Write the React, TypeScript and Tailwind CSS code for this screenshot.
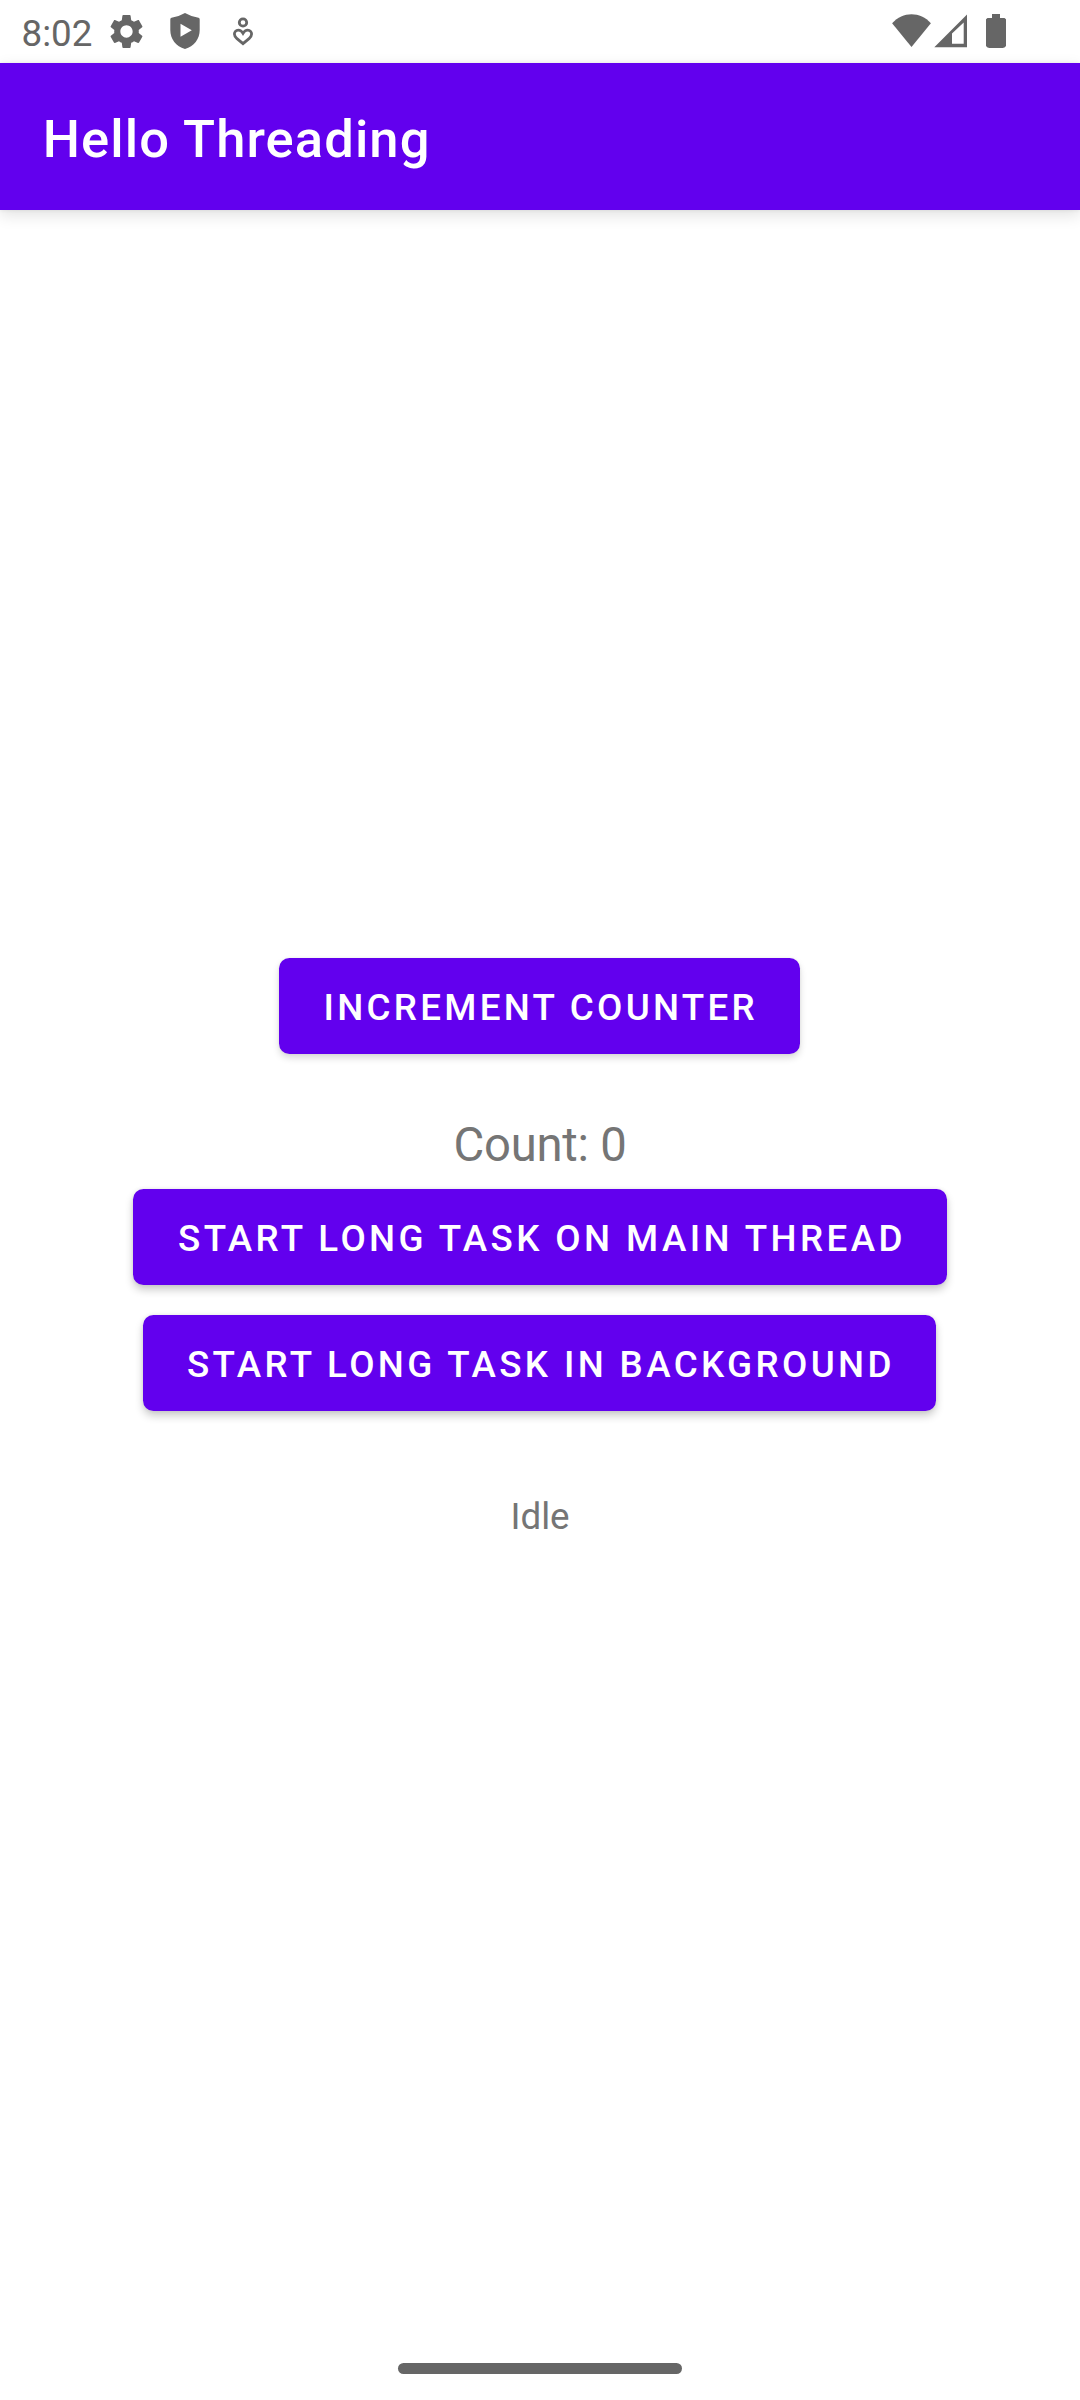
import { useState } from "react";

function StatusBar() {
  return (
    <header className="flex h-[63px] w-full items-center text-[#666]">
      <span className="ml-[21.5px] w-[70.5px] pt-[4px] text-[36.75px] leading-[43px]">8:02</span>
      <svg className="mb-px ml-[14px] h-[41px] w-[41px]" viewBox="0 0 24 24" fill="currentColor" aria-label="Settings">
        <path d="M19.14 12.94c.04-.3.06-.61.06-.94 0-.32-.02-.64-.07-.94l2.03-1.58c.18-.14.23-.41.12-.61l-1.92-3.32c-.12-.22-.37-.29-.59-.22l-2.39.96c-.5-.38-1.03-.7-1.62-.94l-.36-2.54c-.04-.24-.24-.41-.48-.41h-3.84c-.24 0-.43.17-.47.41l-.36 2.54c-.59.24-1.13.57-1.62.94l-2.39-.96c-.22-.08-.47 0-.59.22L2.74 8.87c-.12.21-.08.47.12.61l2.03 1.58c-.05.3-.09.63-.09.94s.02.64.07.94l-2.03 1.58c-.18.14-.23.41-.12.61l1.92 3.32c.12.22.37.29.59.22l2.39-.96c.5.38 1.03.7 1.62.94l.36 2.54c.05.24.24.41.48.41h3.84c.24 0 .44-.17.47-.41l.36-2.54c.59-.24 1.13-.56 1.62-.94l2.39.96c.22.08.47 0 .59-.22l1.92-3.32c.12-.22.07-.47-.12-.61l-2.01-1.58zM12 15.6c-1.98 0-3.6-1.62-3.6-3.6s1.62-3.6 3.6-3.6 3.6 1.62 3.6 3.6-1.62 3.6-3.6 3.6z" />
      </svg>
      <svg className="mb-px ml-[23px] h-[36px] w-[30px]" viewBox="0 0 30 36" fill="currentColor" fillRule="evenodd" aria-label="Protection">
        <path d="M15 0 Q8 4 1.5 4.8 Q.3 5 .3 6.5 V17 C.3 26 6 33.5 15 36 C24 33.5 29.7 26 29.7 17 V6.5 Q29.7 5 28.5 4.8 Q22 4 15 0Z M10.5 10.8 V23.8 L21.8 17.3Z" />
      </svg>
      <svg className="ml-[33px] h-[29px] w-[20px]" viewBox="0 0 20 29" fill="none" stroke="currentColor" strokeWidth="2.8" aria-label="Wellbeing">
        <circle cx="10" cy="5.5" r="3.7" />
        <path d="M10 16.3 C8.5 13.8 6.8 13.2 5.3 13.2 C2.8 13.2 1.4 15 1.4 17 C1.4 19 2.4 20.2 4 21.7 L10 26.6 L16 21.7 C17.6 20.2 18.6 19 18.6 17 C18.6 15 17.2 13.2 14.7 13.2 C13.2 13.2 11.5 13.8 10 16.3Z" />
      </svg>
      <div className="mb-[1px] ml-auto mr-[74px] flex h-[35px] items-start">
        <svg className="h-[34px] w-[40px]" viewBox="0 0 40 34" fill="currentColor" aria-label="Wi-Fi">
          <path d="M.1 9.3 C5.5 3.2 12.5 .2 19.5 .2 S33.7 3.2 38.9 9.3 L19.5 33Z" />
        </svg>
        <svg className="ml-[2px] h-[34px] w-[33px]" viewBox="0 0 33 34" fill="currentColor" fillRule="evenodd" aria-label="Signal">
          <path d="M33 .5 V33.3 H.3Z M29.7 8.5 L18 19.5 V29.7 H29.7Z" />
        </svg>
        <svg className="ml-[19px] h-[34px] w-[20px]" viewBox="0 0 20 34" fill="currentColor" aria-label="Battery">
          <path d="M6 0 H14 V4 H18.5 L20 5.3 V32 L18.5 33.5 H17.5 V34 H2.5 V33.5 H1.5 L0 32 V5.3 L1.5 4 H6Z" />
        </svg>
      </div>
    </header>
  );
}

type ActionButtonProps = { label: string; className: string; onClick: () => void };

function ActionButton({ label, className, onClick }: ActionButtonProps) {
  return (
    <button
      type="button"
      onClick={onClick}
      className={`flex h-24 items-center whitespace-nowrap rounded-[10.5px] bg-[#6200ee] pt-[2px] text-[36.75px] font-medium leading-[43px] text-white ${className}`}
    >
      {label}
    </button>
  );
}

export default function App() {
  const [count, setCount] = useState(0);
  const [status, setStatus] = useState("Idle");

  return (
    <div className="flex h-[2400px] w-[1080px] flex-col overflow-hidden bg-white font-[Roboto,sans-serif]">
      <StatusBar />
      <div className="flex h-[147px] items-center bg-[#6200ee] pl-[42.7px] pt-[5px] shadow-[0_5px_15px_rgba(0,0,0,0.12),0_0_4px_rgba(0,0,0,0.08)]">
        <h1 className="text-[52.5px] font-medium leading-[62px] tracking-[1.1px] text-white">Hello Threading</h1>
      </div>
      <main className="flex flex-1 flex-col items-center pt-[748px] text-[#757575]">
        <ActionButton
          label="INCREMENT COUNTER"
          onClick={() => setCount(count + 1)}
          className="mr-px w-[521px] pl-[44.5px] tracking-[3.28px] shadow-[0_4px_7px_rgba(0,0,0,0.15),0_0_3px_rgba(0,0,0,0.06)]"
        />
        <p className="mt-[64px] h-[71px] text-[47.25px] leading-[55px] tracking-[-0.25px]">Count: {count}</p>
        <ActionButton
          label="START LONG TASK ON MAIN THREAD"
          onClick={() => setStatus("Done")}
          className="w-[814px] pl-[45px] tracking-[3.4px] shadow-[0_5px_8px_rgba(0,0,0,0.2),0_0_4px_rgba(0,0,0,0.08)]"
        />
        <ActionButton
          label="START LONG TASK IN BACKGROUND"
          onClick={() => setStatus("Running")}
          className="mr-px mt-[30px] w-[793px] pl-[44px] tracking-[3.37px] shadow-[0_5px_8px_rgba(0,0,0,0.2),0_0_4px_rgba(0,0,0,0.08)]"
        />
        <p className="mt-[84px] text-[36.75px] leading-[43px]">{status}</p>
      </main>
      <footer className="flex h-[37px] justify-center">
        <div className="h-[11px] w-[284px] rounded-full bg-[#666]" />
      </footer>
    </div>
  );
}
